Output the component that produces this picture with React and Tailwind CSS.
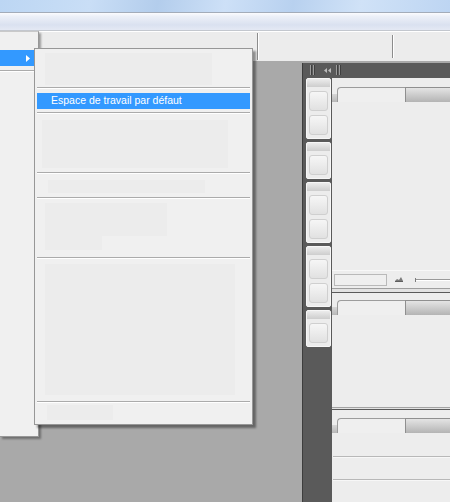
import React from 'react';

// dock tool buttons, grouped the way the palette stacks them
const toolGroups = [2, 1, 2, 2, 1];

function ToolGroup({ count }) {
  return (
    <div className="flex flex-col items-center rounded-[2px] border border-[#f7f7f7] bg-[#ececec] pb-[3px]">
      <div className="h-[8px] w-full rounded-t-[2px] bg-[linear-gradient(to_bottom,#ececec,#cdcdcd)]" />
      <div className="flex flex-col gap-[4px] pt-[4px]">
        {Array.from({ length: count }).map((_, i) => (
          <div
            key={i}
            className="h-[20px] w-[19px] rounded-[3px] border border-[#cfcfcf] bg-[linear-gradient(to_bottom,#f6f6f6,#e1e1e1)]"
          />
        ))}
      </div>
    </div>
  );
}

function TabStrip() {
  return (
    <div className="flex h-[15px] shrink-0">
      <div className="h-[8px] w-[5px] self-end bg-[linear-gradient(to_bottom,#d6d6d6,#b8b8b8)]" />
      <div className="w-[68px] rounded-tl-[4px] border-l border-t border-[#9c9c9c] bg-[#efefef]" />
      <div className="flex-1 border-l border-t border-[#8f8f8f] bg-[linear-gradient(to_bottom,#e4e4e4,#b4b4b4)]" />
    </div>
  );
}

function Ghost({ className }) {
  return <div className={'bg-[#ececec] ' + className} />;
}

function Separator() {
  return <div className="h-[2px] shrink-0 border-b border-white bg-[#ababab]" />;
}

function DockHeader() {
  return (
    <div className="flex h-[15px] shrink-0 items-center pl-[7px]">
      <svg width="40" height="11" viewBox="0 0 40 11">
        <rect x="0" y="0" width="1" height="10" fill="#9d9d9d" />
        <rect x="1" y="0" width="1" height="10" fill="#3f3f3f" />
        <rect x="3" y="0" width="1" height="10" fill="#9d9d9d" />
        <rect x="4" y="0" width="1" height="10" fill="#3f3f3f" />
        <path d="M14 5.5 L17 3 L17 8 Z" fill="#bdbdbd" />
        <path d="M18 5.5 L21 3 L21 8 Z" fill="#bdbdbd" />
        <rect x="26" y="0" width="1" height="10" fill="#9d9d9d" />
        <rect x="27" y="0" width="1" height="10" fill="#3f3f3f" />
        <rect x="29" y="0" width="1" height="10" fill="#9d9d9d" />
        <rect x="30" y="0" width="1" height="10" fill="#3f3f3f" />
      </svg>
    </div>
  );
}

export default function App() {
  return (
    <div className="relative flex h-[502px] w-[450px] flex-col overflow-hidden bg-[#a9a9a9] font-['Liberation_Sans',Arial,sans-serif]">
      {/* window caption */}
      <div className="h-[12px] shrink-0 bg-[linear-gradient(100deg,#bcd6f3_0%,#c9def6_20%,#b3cdec_35%,#cde0f7_50%,#b8d1ef_65%,#d0e2f7_80%,#bdd5f2_100%)]" />
      <div className="h-[1px] shrink-0 bg-[#a3acb9]" />
      {/* menu bar */}
      <div className="h-[17px] shrink-0 bg-[linear-gradient(to_bottom,#fbfcfe_0%,#ecf0f8_20%,#dae1f0_70%,#e4e9f4_100%)]" />
      <div className="h-[1px] shrink-0 bg-[#c3c7ce]" />
      {/* toolbar */}
      <div className="flex h-[30px] shrink-0 border-t border-white bg-[#ececec]">
        <div className="w-[257px]" />
        <div className="my-[1px] w-[2px] border-r border-white bg-[#8c8c8c]" />
        <div className="w-[133px]" />
        <div className="my-[3px] w-[2px] border-r border-white bg-[#8c8c8c]" />
      </div>

      {/* workspace + dock */}
      <div className="flex min-h-0 flex-1">
        <div className="flex-1" />
        <div className="mt-[2px] flex w-[148px] flex-col border-l border-[#3d3d3d] bg-[#5a5a5a]">
          <DockHeader />
          <div className="flex min-h-0 flex-1">
            <div className="ml-[3px] flex w-[25px] flex-col gap-[3px]">
              {toolGroups.map((n, i) => (
                <ToolGroup key={i} count={n} />
              ))}
            </div>
            <div className="ml-[1px] flex flex-1 flex-col gap-[1px]">
              {/* panel 1 */}
              <div className="flex h-[214px] flex-col bg-[#ededed] pt-[9px]">
                <TabStrip />
                <div className="flex-1" />
                <div className="flex h-[18px] items-center border-t border-[#f8f8f8]">
                  <div className="ml-[2px] h-[12px] w-[53px] border border-[#b9b9b9] bg-[#efefef]" />
                  <svg className="ml-[8px]" width="8" height="5" viewBox="0 0 8 5">
                    <path d="M0 4 L2 2 L4 3 L6 0 L8 4 Z" fill="#7a7a7a" />
                    <rect x="0" y="4" width="8" height="1" fill="#5e5e5e" />
                  </svg>
                  <div className="ml-[12px] flex flex-1 items-center">
                    <div className="h-[4px] w-[1px] bg-[#7d7d7d]" />
                    <div className="h-[2px] flex-1 border-b border-white bg-[#9a9a9a]" />
                  </div>
                </div>
                <div className="h-[1px] bg-[#9e9e9e]" />
                <div className="h-[3px] bg-[#e2e2e2]" />
              </div>
              {/* panel 2 */}
              <div className="flex h-[116px] flex-col bg-[#ededed] pt-[7px]">
                <TabStrip />
                <div className="flex-1" />
                <div className="h-[1px] bg-[#a3a3a3]" />
                <div className="h-[1px] bg-[#e2e2e2]" />
              </div>
              {/* panel 3 */}
              <div className="flex flex-1 flex-col bg-[#ededed] pt-[8px]">
                <TabStrip />
                <div className="h-[23px]" />
                <div className="ml-[1px] h-[2px] border-b border-[#f7f7f7] bg-[#b8b8b8]" />
                <div className="h-[21px]" />
                <div className="ml-[1px] h-[2px] border-b border-[#f7f7f7] bg-[#b8b8b8]" />
              </div>
            </div>
          </div>
        </div>
      </div>

      {/* Window menu dropdown */}
      <div className="absolute left-0 top-[31px] h-[406px] w-[39px] border-b border-r border-t border-[#979797] border-t-[#c9c9c9] bg-[#f0f0f0] shadow-[2px_2px_2px_rgba(0,0,0,0.35)]">
        <div className="mt-[18px] flex h-[16px] w-[36px] items-center justify-end bg-[#3399ff] pr-[6px]">
          <svg width="4" height="7" viewBox="0 0 4 7">
            <path d="M0 0 L4 3.5 L0 7 Z" fill="#ffffff" />
          </svg>
        </div>
        <div className="mt-[4px] h-[2px] w-[34px] border-b border-white bg-[#ababab]" />
      </div>

      {/* Workspace submenu */}
      <div className="absolute left-[34px] top-[48px] flex h-[377px] w-[219px] flex-col border border-[#979797] bg-[#f0f0f0] px-[2px] shadow-[3px_3px_2px_rgba(0,0,0,0.4)]">
        <div className="h-[38px] shrink-0 pl-[8px] pt-[4px]">
          <Ghost className="h-[32px] w-[167px]" />
        </div>
        <Separator />
        <div className="mt-[4px] flex h-[16px] shrink-0 items-center bg-[#3399ff] pl-[14px] text-[10.5px] text-white">
          Espace de travail par défaut
        </div>
        <div className="h-[3px] shrink-0" />
        <Separator />
        <div className="h-[58px] shrink-0 pl-[5px] pt-[6px]">
          <Ghost className="h-[48px] w-[186px]" />
        </div>
        <Separator />
        <div className="h-[23px] shrink-0 pl-[11px] pt-[6px]">
          <Ghost className="h-[13px] w-[157px]" />
        </div>
        <Separator />
        <div className="h-[58px] shrink-0 pl-[8px] pt-[4px]">
          <Ghost className="h-[33px] w-[122px]" />
          <Ghost className="h-[14px] w-[57px]" />
        </div>
        <Separator />
        <div className="h-[142px] shrink-0 pl-[8px] pt-[5px]">
          <Ghost className="h-[131px] w-[190px]" />
        </div>
        <Separator />
        <div className="flex-1 pl-[10px] pt-[2px]">
          <Ghost className="h-[15px] w-[66px]" />
        </div>
      </div>
    </div>
  );
}
